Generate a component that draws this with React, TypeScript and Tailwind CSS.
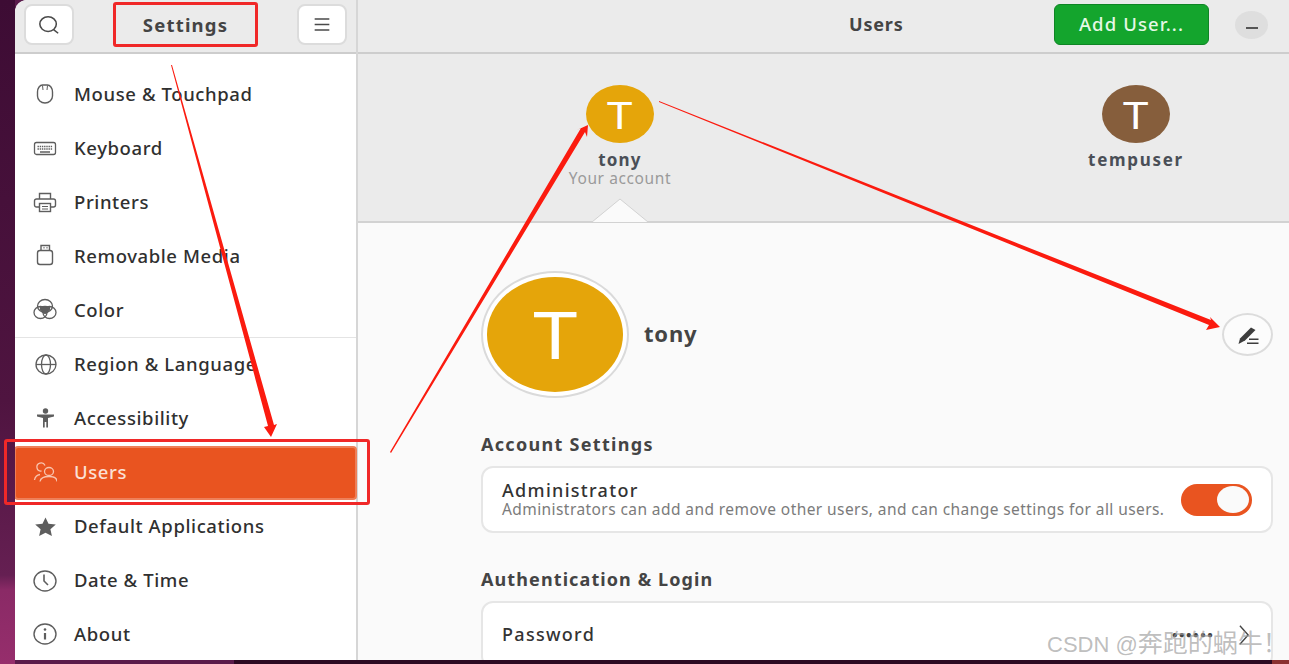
import type { ReactNode } from "react";

const FONT = "font-['Noto_Sans',sans-serif]";

interface NavItem {
  label: string;
  icon: ReactNode;
  active?: boolean;
}

const iconClass = "w-[24px] h-[24px] text-[#5e5e5e]";

const MouseIcon = () => (
  <svg viewBox="0 0 24 24" className={iconClass} fill="none" stroke="currentColor" strokeWidth="1.4">
    <path d="M4.500 9c0-4 2.500-7 5-7h5c2.500 0 5 3 5 7v4c0 4-3.500 7-7.500 7s-7.500-3-7.500-7z" />
    <path d="M9.500 2.500 10 7M14.500 2.500 14 7" strokeWidth="1" />
  </svg>
);

const KeyboardIcon = () => (
  <svg viewBox="0 0 24 24" className={iconClass} fill="none" stroke="currentColor" strokeWidth="1.3">
    <rect x="1.500" y="5.500" width="21" height="12" rx="2" />
    <path d="M4.500 9.500h15M4.500 12h15" strokeDasharray="1.400 0.800" strokeWidth="1.300" />
    <path d="M7 15h10" strokeWidth="1.300" />
  </svg>
);

const PrinterIcon = () => (
  <svg viewBox="0 0 24 24" className={iconClass} fill="none" stroke="currentColor" strokeWidth="1.4">
    <path d="M6.500 8V2.500h11V8" />
    <path d="M6 16H3.500a2 2 0 0 1-2-2v-4a2 2 0 0 1 2-2h17a2 2 0 0 1 2 2v4a2 2 0 0 1-2 2H18" />
    <rect x="6.500" y="12.500" width="11" height="8" />
    <path d="M9 15.500h6M9 18h6" strokeWidth="1" />
  </svg>
);

const UsbIcon = () => (
  <svg viewBox="0 0 24 24" className={iconClass} fill="none" stroke="currentColor" strokeWidth="1.4">
    <rect x="4.500" y="6.500" width="15" height="14" rx="2.500" />
    <path d="M8 6.500v-5h8.500v5" />
    <path d="M10.500 3.700h1M13.500 3.700h1" />
  </svg>
);

const ColorIcon = () => (
  <svg viewBox="0 0 24 24" className={iconClass} fill="none" stroke="currentColor" strokeWidth="1.3">
    <ellipse cx="12" cy="8" rx="7.500" ry="6.500" />
    <ellipse cx="7.500" cy="14.500" rx="6.500" ry="6" />
    <ellipse cx="16.500" cy="14.500" rx="6.500" ry="6" />
    <path d="M7.500 9.500c3-1.300 6-1.300 9 0 .3 2.400-1.800 5-4.500 6-2.700-1-4.800-3.600-4.500-6z" fill="currentColor" />
  </svg>
);

const GlobeIcon = () => (
  <svg viewBox="0 0 24 24" className={iconClass} fill="none" stroke="currentColor" strokeWidth="1.3">
    <ellipse cx="13" cy="11.500" rx="10" ry="9.500" />
    <ellipse cx="13" cy="11.500" rx="4.500" ry="9.500" />
    <path d="M3 11.500h20" />
  </svg>
);

const AccessIcon = () => (
  <svg viewBox="0 0 24 24" className={iconClass} fill="currentColor">
    <circle cx="12.500" cy="4" r="2.700" />
    <path d="M4 7.500h17v2l-6 1.500v9.500h-1.700V15h-1.600v5.500H10V11L4 9.500z" />
  </svg>
);

const UsersIcon = () => (
  <svg viewBox="0 0 24 24" className="h-[24px] w-[24px] text-[#f9c4ae]" fill="none" stroke="currentColor" strokeWidth="1.3">
    <ellipse cx="16" cy="10.500" rx="4.500" ry="4" />
    <path d="M7 20.500c.5-3 4-5 9-5s8 2 8 5" />
    <path d="M12 4.500A4.200 4 0 1 0 8.500 10M1.500 19c.5-3 2.500-5 5.500-5.500" />
  </svg>
);

const StarIcon = () => (
  <svg viewBox="0 0 24 24" className={iconClass} fill="currentColor">
    <path d="m12.500 2.500 3 6.300 7.300.8-5.400 4.700 1.500 6.800-6.400-3.400-6.400 3.400 1.500-6.800-5.400-4.700 7.300-.8z" />
  </svg>
);

const ClockIcon = () => (
  <svg viewBox="0 0 24 24" className={iconClass} fill="none" stroke="currentColor" strokeWidth="1.4">
    <ellipse cx="12" cy="12" rx="11" ry="10" />
    <path d="M11 5.500V12l4 4" strokeWidth="1.600" />
  </svg>
);

const InfoIcon = () => (
  <svg viewBox="0 0 24 24" className={iconClass} fill="none" stroke="currentColor" strokeWidth="1.4">
    <ellipse cx="12" cy="12" rx="11" ry="10" />
    <path d="M12 11v6.500" strokeWidth="2.200" />
    <circle cx="12" cy="7.500" r="1.300" fill="currentColor" stroke="none" />
  </svg>
);

const firstGroup: NavItem[] = [
  { label: "Mouse & Touchpad", icon: <MouseIcon /> },
  { label: "Keyboard", icon: <KeyboardIcon /> },
  { label: "Printers", icon: <PrinterIcon /> },
  { label: "Removable Media", icon: <UsbIcon /> },
  { label: "Color", icon: <ColorIcon /> },
];

const secondGroup: NavItem[] = [
  { label: "Region & Language", icon: <GlobeIcon /> },
  { label: "Accessibility", icon: <AccessIcon /> },
  { label: "Users", icon: <UsersIcon />, active: true },
  { label: "Default Applications", icon: <StarIcon /> },
  { label: "Date & Time", icon: <ClockIcon /> },
  { label: "About", icon: <InfoIcon /> },
];

const NavRow = ({ item }: { item: NavItem }) => (
  <div
    className={
      item.active
        ? "-mx-px flex h-[53.850px] items-center gap-[17px] rounded-[4px] border-2 border-[#ee7f58] bg-[#e95420] pl-[17px] text-[#fbe0d5]"
        : "flex h-[53.850px] items-center gap-[17px] pl-[18px] text-[#303030]"
    }
  >
    {item.icon}
    <span className="mb-[1px] text-[18.500px] leading-none font-medium tracking-[0.6px]">{item.label}</span>
  </div>
);

const Sidebar = () => (
  <aside className="flex w-[343px] shrink-0 flex-col border-r-2 border-[#d6d6d6] bg-white">
    <header className="flex h-[54px] shrink-0 items-center justify-between border-b-2 border-[#cdcdcd] bg-[#ebebeb] px-[9px] pb-[3px]">
      <button className="flex h-[41px] w-[50px] items-center justify-center rounded-[8px] border-2 border-[#dcdcdc] bg-white text-[#4a4a4a]">
        <svg viewBox="0 0 24 24" className="h-[22px] w-[22px]" fill="none" stroke="currentColor" strokeWidth="1.700">
          <ellipse cx="11" cy="11" rx="9" ry="8" />
          <path d="m17 17 5 4" />
        </svg>
      </button>
      <span className="text-[18.500px] font-bold tracking-[1.2px] text-[#444]">Settings</span>
      <button className="flex h-[41px] w-[50px] items-center justify-center rounded-[8px] border-2 border-[#dcdcdc] bg-white text-[#4a4a4a]">
        <svg viewBox="0 0 24 24" className="h-[22px] w-[22px]" fill="none" stroke="currentColor" strokeWidth="1.600">
          <path d="M4 5.500h16M4 11.500h16M4 17.500h16" />
        </svg>
      </button>
    </header>
    <nav className="flex-1 pt-[14px]">
      {firstGroup.map((item) => (
        <NavRow key={item.label} item={item} />
      ))}
      <div className="h-[1px] bg-[#e4e4e4]" />
      {secondGroup.map((item) => (
        <NavRow key={item.label} item={item} />
      ))}
    </nav>
  </aside>
);

const TopBar = () => (
  <header className="relative flex h-[54px] shrink-0 items-center justify-end border-b-2 border-[#cdcdcd] bg-[#ebebeb] pr-[21px] pb-[3px]">
    <span className="absolute left-[491px] text-[18px] font-bold tracking-[0.8px] text-[#444]">Users</span>
    <button className="flex h-[41px] w-[155px] items-center justify-center rounded-[6px] border border-[#0f8525] bg-[#14a52d] pb-[2px] text-[18.500px] font-medium tracking-[1.1px] text-[#e6f8e6]">
      Add User...
    </button>
    <span className="ml-[26px] flex h-[28px] w-[33px] items-center justify-center rounded-[50%] bg-[#dedede]">
      <span className="mt-[6px] h-[2px] w-[12px] bg-[#555]" />
    </span>
  </header>
);

const UserStrip = () => (
  <section className="relative flex h-[169px] shrink-0 border-b-2 border-[#d2d2d2] bg-[#ebebeb]">
    <div className="absolute left-[228px] top-[31px] flex w-[68px] flex-col items-center">
      <div className="flex h-[58px] w-[68px] shrink-0 items-center justify-center rounded-[50%] bg-[#e5a50a] text-white">
        <span className="scale-x-[1.200] text-[38px] leading-none">T</span>
      </div>
      <span className="mt-[6px] text-[17px] leading-[21px] font-bold tracking-[1.200px] text-[#4a4f57]">tony</span>
      <span className="whitespace-nowrap text-[15.500px] leading-[16px] tracking-[0.600px] text-[#9a9a9a]">Your account</span>
    </div>
    <div className="absolute left-[744px] top-[31px] flex w-[68px] flex-col items-center">
      <div className="flex h-[58px] w-[68px] shrink-0 items-center justify-center rounded-[50%] bg-[#865e3c] text-white">
        <span className="scale-x-[1.200] text-[38px] leading-none">T</span>
      </div>
      <span className="mt-[6px] text-[17px] leading-[21px] font-bold tracking-[1.700px] text-[#4a4f57]">tempuser</span>
    </div>
    {/* little pointer under the selected user */}
    <svg viewBox="0 0 56 25" className="absolute left-[234px] bottom-[-2px] h-[25px] w-[56px]">
      <path d="M0 24 28 1l28 23z" fill="#fafafa" />
      <path d="M0 24 28 1l28 23" fill="none" stroke="#d2d2d2" />
    </svg>
  </section>
);

const Content = () => (
  <section className="flex-1 overflow-hidden bg-[#fafafa] pl-[123px] pr-[16px] pt-[48px]">
    <div className="flex items-center">
      <div className="flex h-[127px] w-[148px] shrink-0 items-center justify-center rounded-[50%] border-2 border-[#dadada] bg-white">
        <div className="flex h-[115px] w-[136px] items-center justify-center rounded-[50%] bg-[#e5a50a] text-white">
          <span className="mb-[4px] scale-x-[1.200] text-[66px] leading-none">T</span>
        </div>
      </div>
      <span className="mb-[2px] ml-[15px] text-[22px] font-bold tracking-[0.800px] text-[#444]">tony</span>
      <button className="ml-auto flex h-[43px] w-[51px] items-center justify-center rounded-[50%] border-2 border-[#dcdcdc] bg-[#fcfcfc] text-[#3d3d3d]">
        <svg viewBox="0 0 24 24" className="h-[24px] w-[24px]" fill="currentColor">
          <path d="M2.500 21 4 15.500 15 4.500 19.500 7 9 17.500z" />
          <path d="M13 15.500h9.500V17H13zM11 19.500h11.500V21H11z" />
        </svg>
      </button>
    </div>

    <h2 className="mt-[34px] text-[18px] leading-[24px] font-bold tracking-[1.300px] text-[#444]">Account Settings</h2>
    <div className="mt-[10px] flex h-[67px] items-center justify-between rounded-[12px] border-2 border-[#e6e6e6] bg-white pb-[2px] pl-[19px] pr-[19px]">
      <div className="flex flex-col">
        <span className="text-[18px] leading-[20px] font-medium tracking-[1.300px] text-[#333]">Administrator</span>
        <span className="text-[15.500px] leading-[18px] tracking-[0.420px] text-[#7b7b7b]">
          Administrators can add and remove other users, and can change settings for all users.
        </span>
      </div>
      <span className="mt-[2px] flex h-[32px] w-[71px] items-center justify-end rounded-full bg-[#e95420] pr-[3px]">
        <span className="h-[27px] w-[32px] rounded-[50%] bg-[#fafafa]" />
      </span>
    </div>

    <h2 className="mt-[34px] text-[18px] leading-[24px] font-bold tracking-[1.100px] text-[#444]">Authentication &amp; Login</h2>
    <div className="mt-[10px] flex h-[67px] items-center justify-between rounded-[12px] border-2 border-[#e6e6e6] bg-white pl-[19px] pr-[20px]">
      <span className="text-[18px] font-medium tracking-[1.300px] text-[#333]">Password</span>
      <span className="flex items-center gap-[24px] text-[#444]">
        <span className="text-[10px] font-bold tracking-[1px]">●●●●●●</span>
        <svg viewBox="0 0 14 24" className="h-[22px] w-[13px]" fill="none" stroke="currentColor" strokeWidth="1.500">
          <path d="m2 2 9 10-9 10" />
        </svg>
      </span>
    </div>
  </section>
);

// red annotations drawn on top of the screenshot
const Annotations = () => (
  <>
    <div className="absolute left-[113px] top-[2px] h-[45px] w-[145px] rounded-[3px] border-[3px] border-[#f02828]" />
    <div className="absolute left-[4px] top-[439px] h-[66px] w-[366px] rounded-[3px] border-[3px] border-[#f02828]" />
    <svg className="absolute left-0 top-0 h-[664px] w-[1289px]" viewBox="0 0 1289 664">
      <polygon points="171,65 172,65 274,425 277,424 271,437 264,427 268,426" fill="#fb1b0f" />
      <polygon points="390,452 581,128 577,130 588,125 587,137 585,132 391,453" fill="#fb1b0f" />
      <polygon points="659,101 1211,320 1210,317 1220,327 1206,330 1209,325 659,102" fill="#fb1b0f" />
    </svg>
  </>
);

const App = () => (
  <div
    className={`relative h-[664px] w-[1289px] overflow-hidden [background:linear-gradient(to_bottom,#3d0c34_0,#4f1440_400px,#651f52_575px,#8a2a66_590px,#962e6c_664px)_0_0/15px_100%_no-repeat,linear-gradient(to_right,#5a1b4b_234px,#2c0a22_234px,#2c0a22_1272px,#8a3030_1272px)] ${FONT}`}
  >
    <div className="ml-[15px] flex h-[660px] overflow-hidden rounded-tl-[12px]">
      <Sidebar />
      <main className="flex min-w-0 flex-1 flex-col">
        <TopBar />
        <UserStrip />
        <Content />
      </main>
    </div>
    <Annotations />
    <span className="absolute left-[1047px] top-[630px] whitespace-nowrap text-[22px] leading-[26px] text-[#999]/65 font-['Liberation_Sans','Noto_Sans_CJK_SC',sans-serif]">
      CSDN @<span className="text-[25px]">奔跑的蜗牛！</span>
    </span>
  </div>
);

export default App;
